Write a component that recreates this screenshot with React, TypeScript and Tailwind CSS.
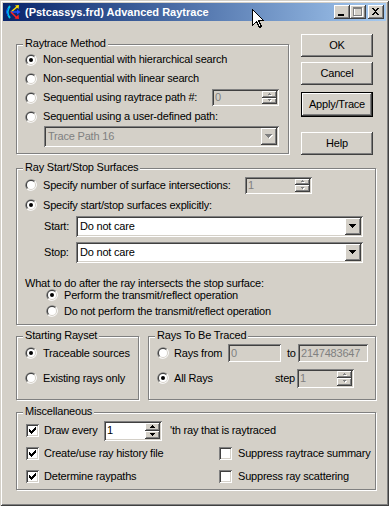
import React from "react";

const raised =
  "shadow-[inset_-1px_-1px_0_#404040,inset_1px_1px_0_#ffffff,inset_-2px_-2px_0_#808080]";
const sunken =
  "shadow-[inset_1px_1px_0_#808080,inset_-1px_-1px_0_#ffffff,inset_2px_2px_0_#404040,inset_-2px_-2px_0_#d4d0c8]";

function Radio({ checked = false }: { checked?: boolean }) {
  return (
    <svg width="12" height="12" viewBox="0 0 12 12" className="shrink-0">
      <path d="M10.24 1.76A6 6 0 0 0 1.76 10.24Z" fill="#808080" />
      <path d="M10.24 1.76A6 6 0 0 1 1.76 10.24Z" fill="#ffffff" />
      <path d="M9.54 2.46A5 5 0 0 0 2.46 9.54Z" fill="#404040" />
      <path d="M9.54 2.46A5 5 0 0 1 2.46 9.54Z" fill="#d4d0c8" />
      <circle cx="6" cy="6" r="4" fill="#ffffff" />
      {checked && <circle cx="6" cy="6" r="2" fill="#000000" />}
    </svg>
  );
}

function Check({ checked = false }: { checked?: boolean }) {
  const cols = [
    [3, 5],
    [4, 6],
    [5, 7],
    [6, 6],
    [7, 5],
    [8, 4],
    [9, 3],
  ];
  return (
    <span className={`block w-[13px] h-[13px] bg-white shrink-0 ${sunken}`}>
      {checked && (
        <svg width="13" height="13" viewBox="0 0 13 13" shapeRendering="crispEdges">
          {cols.map(([x, y]) => (
            <rect key={x} x={x} y={y} width="1" height="3" fill="#000" />
          ))}
        </svg>
      )}
    </span>
  );
}

function Arrow({
  dir,
  size = 5,
  disabled = false,
}: {
  dir: "up" | "down";
  size?: number;
  disabled?: boolean;
}) {
  const rows = (size + 1) / 2;
  const rects = (color: string, off: number) =>
    Array.from({ length: rows }, (_, i) => {
      const y = dir === "down" ? i : rows - 1 - i;
      return (
        <rect
          key={`${color}${i}`}
          x={i + off}
          y={y + off}
          width={size - 2 * i}
          height={1}
          fill={color}
        />
      );
    });
  return (
    <svg width={size + 1} height={rows + 1} shapeRendering="crispEdges">
      {disabled && rects("#ffffff", 1)}
      {rects(disabled ? "#808080" : "#000000", 0)}
    </svg>
  );
}

function Field({
  value,
  disabled = false,
  className = "",
}: {
  value: string;
  disabled?: boolean;
  className?: string;
}) {
  return (
    <div
      className={`${sunken} ${
        disabled ? "bg-[#d4d0c8] text-[#808080]" : "bg-white text-black"
      } flex items-center p-[2px] pl-[3px] shrink-0 ${className}`}
    >
      {value}
    </div>
  );
}

function Spin({
  value,
  disabled = false,
  className = "",
  big = false,
}: {
  value: string;
  disabled?: boolean;
  className?: string;
  big?: boolean;
}) {
  return (
    <div
      className={`${sunken} ${
        disabled ? "bg-[#d4d0c8] text-[#808080]" : "bg-white text-black"
      } flex p-[2px] shrink-0 ${className}`}
    >
      <span className="flex-1 flex items-center pl-[1px]">{value}</span>
      <span className="w-[15px] flex flex-col">
        <span className={`flex-1 bg-[#d4d0c8] ${raised} flex items-center justify-center`}>
          <Arrow dir="up" size={big ? 5 : 3} disabled={disabled} />
        </span>
        <span className={`flex-1 bg-[#d4d0c8] ${raised} flex items-center justify-center`}>
          <Arrow dir="down" size={big ? 5 : 3} disabled={disabled} />
        </span>
      </span>
    </div>
  );
}

function Combo({
  value,
  disabled = false,
  className = "",
}: {
  value: string;
  disabled?: boolean;
  className?: string;
}) {
  return (
    <div
      className={`${sunken} ${
        disabled ? "bg-[#d4d0c8] text-[#808080]" : "bg-white text-black"
      } flex p-[2px] shrink-0 ${className}`}
    >
      <span className="flex-1 flex items-center pl-[2px]">{value}</span>
      <span className={`w-[16px] bg-[#d4d0c8] ${raised} flex items-center justify-center`}>
        <Arrow dir="down" size={7} disabled={disabled} />
      </span>
    </div>
  );
}

function Btn({
  children,
  def = false,
  className = "",
}: {
  children: React.ReactNode;
  def?: boolean;
  className?: string;
}) {
  if (def) {
    return (
      <div className={`border border-black ${className}`}>
        <div className={`h-full ${raised} bg-[#d4d0c8] flex items-center justify-center`}>
          {children}
        </div>
      </div>
    );
  }
  return (
    <div className={`${raised} bg-[#d4d0c8] flex items-center justify-center ${className}`}>
      {children}
    </div>
  );
}

function Group({
  title,
  className = "",
  children,
}: {
  title: string;
  className?: string;
  children?: React.ReactNode;
}) {
  return (
    <div
      className={`border border-[#808080] shadow-[inset_1px_1px_0_#ffffff,1px_1px_0_#ffffff] flex flex-col shrink-0 ${className}`}
    >
      <span className="-mt-[8px] ml-[6px] px-[2px] self-start bg-[#d4d0c8] leading-[13px]">
        {title}
      </span>
      {children}
    </div>
  );
}

function RadioRow({
  label,
  checked = false,
  className = "",
  children,
}: {
  label?: string;
  checked?: boolean;
  className?: string;
  children?: React.ReactNode;
}) {
  return (
    <div className={`flex items-center ${className}`}>
      <Radio checked={checked} />
      {label && <span className="ml-[6px] whitespace-nowrap">{label}</span>}
      {children}
    </div>
  );
}

function TitleBtn({ kind, className = "" }: { kind: "min" | "max" | "close"; className?: string }) {
  return (
    <div className={`w-[16px] h-[14px] bg-[#d4d0c8] ${raised} shrink-0 ${className}`}>
      <svg width="16" height="14" viewBox="0 0 16 14" shapeRendering="crispEdges">
        {kind === "min" && <rect x="4" y="9" width="6" height="2" fill="#000" />}
        {kind === "max" && (
          <g>
            <rect x="4.5" y="3.5" width="8" height="8" fill="none" stroke="#ffffff" />
            <rect x="3.5" y="2.5" width="8" height="8" fill="none" stroke="#808080" />
            <rect x="3" y="3" width="9" height="1" fill="#808080" />
          </g>
        )}
        {kind === "close" && (
          <path
            d="M4 3h2v1h1v1h1V4h1V3h2v1h-1v1h-1v1h-1v1h1v1h1v1h1v1H9V9H8V8H7v1H6v1H4V9h1V8h1V7h1V6H6V5H5V4H4z"
            fill="#000"
          />
        )}
      </svg>
    </div>
  );
}

function AppIcon() {
  return (
    <svg width="16" height="16" viewBox="0 0 16 16" className="shrink-0">
      <path d="M5 2 Q0 8 5 14" stroke="#00c8e8" strokeWidth="2" fill="none" />
      <path d="M3 4 Q0 8 3 12" stroke="#0050ff" strokeWidth="1" fill="none" />
      <path d="M6 8 L13 2" stroke="#ffe000" strokeWidth="1.5" />
      <path d="M10 1.5 L14 1 L13.5 5 Z" fill="#ffe000" />
      <path d="M6 8 L13 8" stroke="#2050ff" strokeWidth="1.5" />
      <path d="M12 5.5 L15.5 8 L12 10.5 Z" fill="#2050ff" />
      <path d="M6 8 L12 14" stroke="#ff2020" strokeWidth="1.5" />
      <path d="M13.5 10.5 L14 15 L9.5 14.5 Z" fill="#ff2020" />
    </svg>
  );
}

function Cursor() {
  return (
    <svg
      width="13"
      height="20"
      viewBox="0 0 13 20"
      className="absolute left-[252px] top-[9px]"
      shapeRendering="crispEdges"
    >
      <path
        d="M0.5 0.5 L0.5 16.5 L4.5 12.5 L7.5 18.5 L9.5 17.5 L6.5 11.5 L11.5 11.5 Z"
        fill="#ffffff"
        stroke="#000000"
      />
    </svg>
  );
}

export default function App() {
  return (
    <div className="relative w-[389px] h-[506px] overflow-hidden bg-[#d4d0c8] p-[3px] text-[11px] leading-[13px] tracking-[-0.2px] text-black [font-family:'Liberation_Sans',Arial,sans-serif] shadow-[inset_1px_1px_0_#d4d0c8,inset_-1px_-1px_0_#404040,inset_2px_2px_0_#ffffff,inset_-2px_-2px_0_#808080]">
      <div className="h-[18px] flex items-center bg-linear-to-r from-[#0a246a] to-[#a6caf0] px-[2px]">
        <AppIcon />
        <span className="ml-[4px] flex-1 text-white font-bold tracking-normal whitespace-nowrap">
          (Pstcassys.frd) Advanced Raytrace
        </span>
        <TitleBtn kind="min" />
        <TitleBtn kind="max" />
        <TitleBtn kind="close" className="ml-[2px]" />
      </div>

      <div className="px-[13px]">
        <div className="flex items-start h-[135px]">
          <Group title="Raytrace Method" className="mt-[23px] w-[273px] h-[110px]">
            <div className="pl-[8px] flex flex-col">
              <RadioRow checked label="Non-sequential with hierarchical search" className="h-[19px]" />
              <RadioRow label="Non-sequential with linear search" className="h-[19px]" />
              <RadioRow label="Sequential using raytrace path #:" className="h-[19px]">
                <Spin value="0" disabled className="ml-auto mr-[9px] w-[67px] h-[17px]" />
              </RadioRow>
              <RadioRow label="Sequential using a user-defined path:" className="h-[19px]" />
            </div>
            <Combo value="Trace Path 16" disabled className="ml-[27px] w-[235px] h-[21px]" />
          </Group>

          <div className="ml-[12px] mt-[13px] w-[74px] flex flex-col">
            <Btn className="h-[23px]">OK</Btn>
            <Btn className="mt-[5px] h-[23px]">Cancel</Btn>
            <Btn def className="mt-[7px] h-[25px]">
              Apply/Trace
            </Btn>
            <Btn className="mt-[15px] h-[23px]">Help</Btn>
          </div>
        </div>

        <Group title="Ray Start/Stop Surfaces" className="mt-[12px] w-[360px] h-[157px]">
          <div className="pl-[8px] pt-[1px] flex flex-col">
            <div className="flex items-center h-[20px]">
              <Radio />
              <span className="ml-[6px] w-[202px] whitespace-nowrap">
                Specify number of surface intersections:
              </span>
              <Spin value="1" disabled className="w-[67px] h-[17px]" />
            </div>
            <RadioRow checked label="Specify start/stop surfaces explicitly:" className="h-[20px]" />
          </div>
          <div className="pl-[27px] mt-[1px] flex items-center">
            <span className="w-[32px]">Start:</span>
            <Combo value="Do not care" className="w-[287px] h-[21px]" />
          </div>
          <div className="pl-[27px] mt-[5px] flex items-center">
            <span className="w-[32px]">Stop:</span>
            <Combo value="Do not care" className="w-[287px] h-[21px]" />
          </div>
          <div className="pl-[8px] mt-[14px] h-[13px] whitespace-nowrap">
            What to do after the ray intersects the stop surface:
          </div>
          <div className="pl-[29px] -mt-[3px] flex flex-col">
            <RadioRow checked label="Perform the transmit/reflect operation" className="h-[16px]" />
            <RadioRow label="Do not perform the transmit/reflect operation" className="h-[16px]" />
          </div>
        </Group>

        <div className="flex mt-[11px]">
          <Group title="Starting Rayset" className="w-[123px] h-[64px]">
            <div className="pl-[8px] flex flex-col">
              <RadioRow checked label="Traceable sources" className="h-[22px]" />
              <RadioRow label="Existing rays only" className="mt-[3px] h-[22px]" />
            </div>
          </Group>
          <Group title="Rays To Be Traced" className="ml-[9px] w-[228px] h-[64px]">
            <div className="pl-[8px] flex flex-col">
              <div className="flex items-center h-[22px]">
                <Radio />
                <span className="ml-[5px] w-[54px] whitespace-nowrap">Rays from</span>
                <Field value="0" disabled className="w-[53px] h-[18px]" />
                <span className="ml-[6px] w-[11px]">to</span>
                <Field value="2147483647" disabled className="w-[70px] h-[18px]" />
              </div>
              <div className="flex items-center mt-[3px] h-[22px]">
                <Radio checked />
                <span className="ml-[5px] flex-1 whitespace-nowrap">All Rays</span>
                <span className="mr-[2px]">step</span>
                <Spin value="1" disabled className="w-[57px] h-[19px] mr-[21px]" />
              </div>
            </div>
          </Group>
        </div>

        <Group title="Miscellaneous" className="mt-[12px] w-[360px] h-[78px]">
          <div className="pl-[9px] flex flex-col">
            <div className="flex items-center h-[25px]">
              <Check checked />
              <span className="ml-[5px] w-[60px] whitespace-nowrap">Draw every</span>
              <Spin value="1" big className="w-[58px] h-[20px]" />
              <span className="ml-[8px] whitespace-nowrap">'th ray that is raytraced</span>
            </div>
            <div className="flex items-center h-[20px]">
              <div className="w-[193px] flex items-center">
                <Check checked />
                <span className="ml-[5px] whitespace-nowrap">Create/use ray history file</span>
              </div>
              <Check />
              <span className="ml-[6px] whitespace-nowrap">Suppress raytrace summary</span>
            </div>
            <div className="flex items-center mt-[3px] h-[20px]">
              <div className="w-[193px] flex items-center">
                <Check checked />
                <span className="ml-[5px] whitespace-nowrap">Determine raypaths</span>
              </div>
              <Check />
              <span className="ml-[6px] whitespace-nowrap">Suppress ray scattering</span>
            </div>
          </div>
        </Group>
      </div>

      <Cursor />
    </div>
  );
}
